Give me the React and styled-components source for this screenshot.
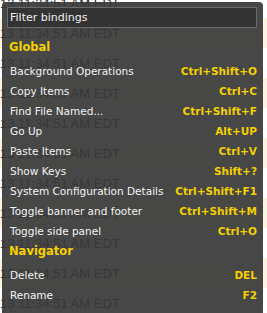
import React from 'react';
import styled, { createGlobalStyle } from 'styled-components';

const GlobalStyle = createGlobalStyle`
  html, body {
    margin: 0;
    padding: 0;
    background: #ffffff;
    overflow: hidden;
  }
`;

const Page = styled.div`
  position: relative;
  width: 267px;
  height: 313px;
  overflow: hidden;
`;

const LogList = styled.div`
  display: flex;
  flex-direction: column;
  margin-top: -12px;
`;

const LogRow = styled.div`
  height: 30px;
  flex-shrink: 0;
  display: flex;
  align-items: center;
  background: ${(p) => (p.$odd ? '#fdf3e1' : '#ffffff')};
  color: #2a2a2a;
  font-family: 'Liberation Sans', Arial, sans-serif;
  font-size: 13px;
  white-space: nowrap;
`;

const Panel = styled.div`
  position: absolute;
  left: 2px;
  top: 2px;
  width: 261px;
  height: 330px;
  background: rgba(57, 57, 57, 0.93);
  border-radius: 4px;
  padding: 5px 6px 0 5px;
  box-sizing: border-box;
  font-family: 'DejaVu Sans', Verdana, sans-serif;
`;

const FilterInput = styled.input`
  display: block;
  width: 100%;
  height: 21px;
  margin: 0 0 9px;
  box-sizing: border-box;
  background: #333333;
  border: 1px solid #6a6a6a;
  color: #f0f0f0;
  font-family: 'DejaVu Sans', Verdana, sans-serif;
  font-size: 11px;
  padding: 0 2px;
  outline: none;
  &::placeholder {
    color: #f0f0f0;
  }
`;

const Section = styled.div`
  display: flex;
  flex-direction: column;
`;

const SectionTitle = styled.div`
  height: 20px;
  margin-bottom: 4px;
  display: flex;
  align-items: center;
  padding-left: 2px;
  color: #f5d000;
  font-weight: bold;
  font-size: 11.5px;
`;

const Binding = styled.div`
  height: 20px;
  display: flex;
  align-items: center;
  justify-content: space-between;
  padding: 0 0 0 3px;
  font-size: 10.5px;
`;

const Label = styled.span`
  color: #f2f2f2;
  white-space: nowrap;
`;

const Keys = styled.span`
  color: #f5d000;
  font-weight: bold;
  white-space: nowrap;
`;

const sections = [
  {
    title: 'Global',
    items: [
      ['Background Operations', 'Ctrl+Shift+O'],
      ['Copy Items', 'Ctrl+C'],
      ['Find File Named...', 'Ctrl+Shift+F'],
      ['Go Up', 'Alt+UP'],
      ['Paste Items', 'Ctrl+V'],
      ['Show Keys', 'Shift+?'],
      ['System Configuration Details', 'Ctrl+Shift+F1'],
      ['Toggle banner and footer', 'Ctrl+Shift+M'],
      ['Toggle side panel', 'Ctrl+O'],
    ],
  },
  {
    title: 'Navigator',
    items: [
      ['Delete', 'DEL'],
      ['Rename', 'F2'],
    ],
  },
];

export default function App() {
  return (
    <Page>
      <GlobalStyle />
      <LogList>
        {Array.from({ length: 12 }).map((_, i) => (
          <LogRow key={i} $odd={i % 2 === 1}>
            13 11:34:51 AM EDT
          </LogRow>
        ))}
      </LogList>
      <Panel>
        <FilterInput placeholder="Filter bindings" />
        {sections.map((s) => (
          <Section key={s.title}>
            <SectionTitle>{s.title}</SectionTitle>
            {s.items.map(([label, keys]) => (
              <Binding key={label}>
                <Label>{label}</Label>
                <Keys>{keys}</Keys>
              </Binding>
            ))}
          </Section>
        ))}
      </Panel>
    </Page>
  );
}
